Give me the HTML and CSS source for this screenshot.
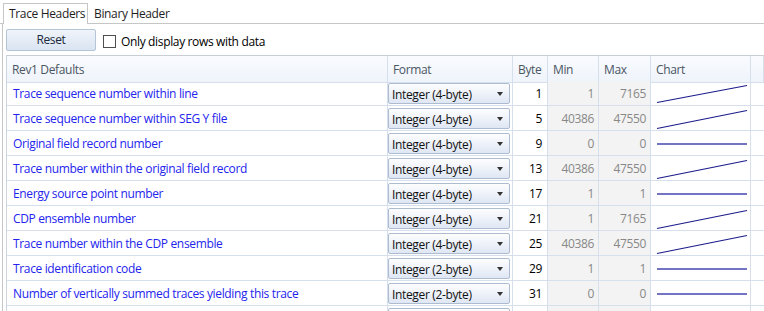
FILE: index.html
```html
<!DOCTYPE html>
<html>
<head>
<meta charset="utf-8">
<link rel="stylesheet" href="styles.css">
</head>
<body>
<div class="tabs">
  <div class="tab active">Trace Headers</div>
  <div class="tab">Binary Header</div>
</div>
<div class="panel">
  <div class="toolbar">
    <div class="btn">Reset</div>
    <label class="chk"><span class="box"></span><span>Only display rows with data</span></label>
  </div>
  <div class="grid">
    <div class="hc">Rev1 Defaults</div><div class="hc">Format</div><div class="hc">Byte</div><div class="hc">Min</div><div class="hc">Max</div><div class="hc">Chart</div><div class="hc"></div>

    <div class="c name">Trace sequence number within line</div>
    <div class="c fmt"><div class="dd">Integer (4-byte)<span class="arr"></span></div></div>
    <div class="c num">1</div><div class="c mm">1</div><div class="c mm">7165</div>
    <div class="c chart"><svg width="100" height="24"><line class="slope" x1="6" y1="21.5" x2="96" y2="4.5"/></svg></div><div class="c fill"></div>

    <div class="c name">Trace sequence number within SEG Y file</div>
    <div class="c fmt"><div class="dd">Integer (4-byte)<span class="arr"></span></div></div>
    <div class="c num">5</div><div class="c mm">40386</div><div class="c mm">47550</div>
    <div class="c chart"><svg width="100" height="24"><line class="slope" x1="6" y1="22.5" x2="96" y2="4.5"/></svg></div><div class="c fill"></div>

    <div class="c name">Original field record number</div>
    <div class="c fmt"><div class="dd">Integer (4-byte)<span class="arr"></span></div></div>
    <div class="c num">9</div><div class="c mm">0</div><div class="c mm">0</div>
    <div class="c chart"><svg width="100" height="24"><line class="flat" x1="6" y1="13" x2="96" y2="13"/></svg></div><div class="c fill"></div>

    <div class="c name">Trace number within the original field record</div>
    <div class="c fmt"><div class="dd">Integer (4-byte)<span class="arr"></span></div></div>
    <div class="c num">13</div><div class="c mm">40386</div><div class="c mm">47550</div>
    <div class="c chart"><svg width="100" height="24"><line class="slope" x1="6" y1="22.5" x2="96" y2="4.5"/></svg></div><div class="c fill"></div>

    <div class="c name">Energy source point number</div>
    <div class="c fmt"><div class="dd">Integer (4-byte)<span class="arr"></span></div></div>
    <div class="c num">17</div><div class="c mm">1</div><div class="c mm">1</div>
    <div class="c chart"><svg width="100" height="24"><line class="flat" x1="6" y1="13" x2="96" y2="13"/></svg></div><div class="c fill"></div>

    <div class="c name">CDP ensemble number</div>
    <div class="c fmt"><div class="dd">Integer (4-byte)<span class="arr"></span></div></div>
    <div class="c num">21</div><div class="c mm">1</div><div class="c mm">7165</div>
    <div class="c chart"><svg width="100" height="24"><line class="slope" x1="6" y1="22.5" x2="96" y2="4.5"/></svg></div><div class="c fill"></div>

    <div class="c name">Trace number within the CDP ensemble</div>
    <div class="c fmt"><div class="dd">Integer (4-byte)<span class="arr"></span></div></div>
    <div class="c num">25</div><div class="c mm">40386</div><div class="c mm">47550</div>
    <div class="c chart"><svg width="100" height="24"><line class="slope" x1="6" y1="22.5" x2="96" y2="4.5"/></svg></div><div class="c fill"></div>

    <div class="c name">Trace identification code</div>
    <div class="c fmt"><div class="dd">Integer (2-byte)<span class="arr"></span></div></div>
    <div class="c num">29</div><div class="c mm">1</div><div class="c mm">1</div>
    <div class="c chart"><svg width="100" height="24"><line class="flat" x1="6" y1="13" x2="96" y2="13"/></svg></div><div class="c fill"></div>

    <div class="c name">Number of vertically summed traces yielding this trace</div>
    <div class="c fmt"><div class="dd">Integer (2-byte)<span class="arr"></span></div></div>
    <div class="c num">31</div><div class="c mm">0</div><div class="c mm">0</div>
    <div class="c chart"><svg width="100" height="24"><line class="flat" x1="6" y1="13" x2="96" y2="13"/></svg></div><div class="c fill"></div>

    <div class="c name"></div>
    <div class="c fmt"><div class="dd"></div></div>
    <div class="c num"></div><div class="c mm"></div><div class="c mm"></div>
    <div class="c chart"></div><div class="c fill"></div>
  </div>
</div>
</body>
</html>
```

FILE: styles.css
```css
html, body {
  margin: 0;
  padding: 0;
  background: #ffffff;
  overflow: hidden;
  width: 764px;
  height: 311px;
}
body {
  font-family: "Segoe UI", "Open Sans", "Noto Sans", sans-serif;
  font-size: 12px;
  letter-spacing: -0.35px;
  color: #000;
}
.tabs {
  display: flex;
  align-items: flex-end;
  height: 23px;
  padding-left: 3px;
  border-bottom: 1px solid #c6c6c6;
}
.tab {
  height: 20px;
  line-height: 21px;
  padding: 0 6px;
  box-sizing: border-box;
  color: #1e1e1e;
  white-space: nowrap;
}
.tab.active {
  width: 85px;
  padding: 0 5px;
  height: 21px;
  line-height: 20px;
  margin-bottom: -1px;
  background: #fff;
  border: 1px solid #c6c6c6;
  border-bottom: none;
}
.panel {
  margin-left: 2px;
  border-left: 1px solid #c6c6c6;
  padding-left: 3px;
  padding-top: 5px;
  height: 300px;
}
.toolbar {
  display: flex;
  align-items: center;
  height: 22px;
  margin-bottom: 4px;
}
.btn {
  width: 90px;
  height: 22px;
  box-sizing: border-box;
  border: 1px solid #b6c4d8;
  border-radius: 2px;
  background: linear-gradient(#f0f4fa, #dae4f2);
  text-align: center;
  line-height: 20px;
  color: #1b2a3d;
}
.chk {
  display: flex;
  align-items: center;
  margin-left: 7px;
  margin-top: 3px;
  white-space: nowrap;
}
.box {
  width: 13px;
  height: 13px;
  box-sizing: border-box;
  border: 1px solid #4f4f4f;
  background: #fff;
  margin-right: 5px;
}
.grid {
  display: grid;
  grid-template-columns: 381px 125px 35px 51px 52px 100px 1fr;
  grid-auto-rows: 25px;
  border-top: 1px solid #c9ced5;
  border-left: 1px solid #cbd5e3;
}
.hc {
  height: 27px;
  box-sizing: border-box;
  border-right: 1px solid #d6dfec;
  border-bottom: 1px solid #d6dfec;
  background: linear-gradient(#f9fbfe, #eff4fb);
  color: #4a5563;
  line-height: 28px;
  padding-left: 5px;
  white-space: nowrap;
  overflow: hidden;
}
.hc:last-child { border-right: none; }
.c {
  height: 25px;
  box-sizing: border-box;
  border-right: 1px solid #d6dfec;
  border-bottom: 1px solid #d6dfec;
  line-height: 26px;
  white-space: nowrap;
  overflow: hidden;
}
.name {
  color: #2424ee;
  padding-left: 6px;
}
.fmt {
  padding: 2px 2px 0 0;
  line-height: 19px;
}
.dd {
  position: relative;
  height: 21px;
  box-sizing: border-box;
  border: 1px solid #aebcd1;
  border-radius: 2px;
  background: linear-gradient(#fdfdfe, #dfe7f4);
  line-height: 21px;
  padding-left: 3px;
  color: #111;
}
.arr {
  position: absolute;
  right: 6px;
  top: 8px;
  width: 0;
  height: 0;
  border-left: 3.5px solid transparent;
  border-right: 3.5px solid transparent;
  border-top: 4px solid #333;
}
.num {
  text-align: right;
  padding-right: 5px;
}
.mm {
  text-align: right;
  padding-right: 4px;
  background: #f3f3f3;
  color: #888888;
}
.chart svg { display: block; }
.fill { border-right: none; }
.slope {
  stroke: #1c1c8c;
  stroke-width: 1.2;
}
.flat {
  stroke: #7474c4;
  stroke-width: 2;
}
```
